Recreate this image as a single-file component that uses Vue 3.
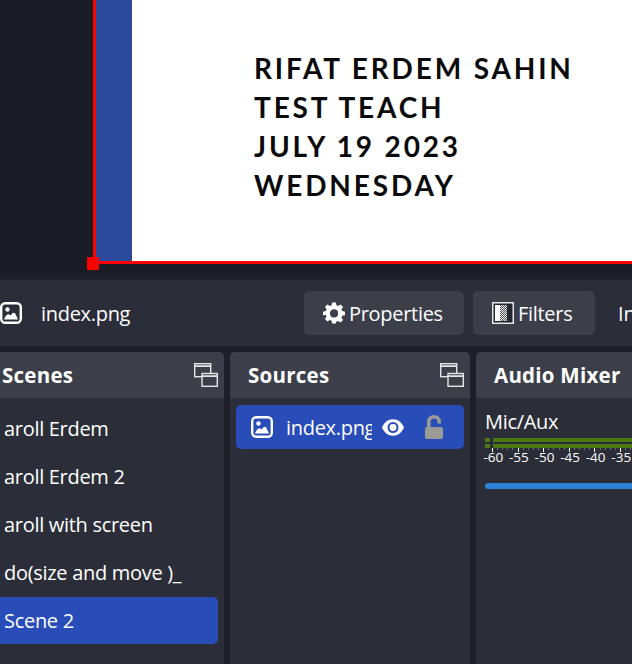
<script setup>
const scenes = [
  { name: 'aroll Erdem', active: false },
  { name: 'aroll Erdem 2', active: false },
  { name: 'aroll with screen', active: false },
  { name: 'do(size and move )_', active: false },
  { name: 'Scene 2', active: true },
]
const titleLines = ['RIFAT ERDEM SAHIN', 'TEST TEACH', 'JULY 19 2023', 'WEDNESDAY']
const scale = ['-60', '-55', '-50', '-45', '-40', '-35']
</script>

<template>
  <div class="app">
    <section class="preview">
      <div class="canvas">
        <div class="strip"></div>
        <div class="slide">
          <div v-for="line in titleLines" :key="line" class="slide-line">{{ line }}</div>
        </div>
        <span class="handle"></span>
      </div>
    </section>

    <div class="preview-gap"></div>

    <section class="toolbar">
      <svg class="image-icon" viewBox="0 0 22 22" fill="none">
        <rect x="1.2" y="1.2" width="19.6" height="19.6" rx="4" stroke="#fff" stroke-width="2.4" />
        <circle cx="7.5" cy="7.5" r="2.2" fill="#fff" />
        <path d="M4 17.5 C5 14 7.500 11.500 9 12.500 C10 13 10.500 13.500 11 13 C12.500 10.500 14.500 10 15.500 12 L18 17.500 Z" fill="#fff" />
      </svg>
      <span class="source-name">index.png</span>
      <button class="tool-btn props">
        <svg class="gear" viewBox="0 0 24 24">
          <path fill="#fff" fill-rule="evenodd" d="M10 1h4l.6 3.1 1.9.8 2.6-1.8 2.8 2.8-1.8 2.6.8 1.9L24 11v4l-3.1.6-.8 1.9 1.8 2.6-2.8 2.8-2.6-1.8-1.9.8L14 24h-4l-.6-3.1-1.9-.8-2.6 1.8-2.8-2.8 1.8-2.6-.8-1.9L0 15v-4l3.1-.6.8-1.9L2.1 5.900l2.8-2.8 2.6 1.8 1.9-.8Zm2 7.500a4.500 4.500 0 1 0 0 9 4.500 4.500 0 0 0 0-9Z" transform="translate(0 -.5)" />
        </svg>
        Properties
      </button>
      <button class="tool-btn filters">
        <svg class="filter-icon" viewBox="0 0 22 22">
          <defs>
            <pattern id="dither" width="2" height="2" patternUnits="userSpaceOnUse">
              <rect width="1" height="1" fill="#e8e8e8" />
              <rect x="1" y="1" width="1" height="1" fill="#e8e8e8" />
              <rect x="1" width="1" height="1" fill="#55575f" />
              <rect y="1" width="1" height="1" fill="#55575f" />
            </pattern>
          </defs>
          <rect x=".75" y=".75" width="20.5" height="20.5" fill="#24262e" stroke="#e6e6e8" stroke-width="1.5" />
          <rect x="3" y="3" width="5" height="16" fill="#fff" />
          <rect x="8" y="3" width="7" height="16" fill="url(#dither)" />
        </svg>
        Filters
      </button>
      <span class="tool-text">Interact</span>
    </section>

    <section class="docks">
      <div class="panel scenes">
        <header class="panel-head">
          <span>Scenes</span>
          <svg class="dock-icon" viewBox="0 0 24 24" fill="none" stroke="#e6e6e8" stroke-width="1.4">
            <rect x=".7" y=".7" width="16" height="13" />
            <path d="M1 3.200h15" stroke-width="1.800" />
            <rect x="8" y="10.500" width="15.300" height="12.800" fill="#3c3f4a" />
            <path d="M8 13.200h15" stroke-width="1.800" />
          </svg>
        </header>
        <ul class="scene-list">
          <li v-for="s in scenes" :key="s.name" class="scene-row" :class="{ active: s.active }">{{ s.name }}</li>
        </ul>
      </div>

      <div class="panel sources">
        <header class="panel-head">
          <span>Sources</span>
          <svg class="dock-icon" viewBox="0 0 24 24" fill="none" stroke="#e6e6e8" stroke-width="1.4">
            <rect x=".7" y=".7" width="16" height="13" />
            <path d="M1 3.200h15" stroke-width="1.800" />
            <rect x="8" y="10.500" width="15.300" height="12.800" fill="#3c3f4a" />
            <path d="M8 13.200h15" stroke-width="1.800" />
          </svg>
        </header>
        <div class="source-row">
          <svg class="image-icon small" viewBox="0 0 22 22" fill="none">
            <rect x="1.2" y="1.2" width="19.6" height="19.6" rx="4" stroke="#fff" stroke-width="2.4" />
            <circle cx="7.5" cy="7.5" r="2.2" fill="#fff" />
            <path d="M4 17.5 C5 14 7.500 11.500 9 12.500 C10 13 10.500 13.500 11 13 C12.500 10.500 14.500 10 15.500 12 L18 17.500 Z" fill="#fff" />
          </svg>
          <span class="source-label">index.png</span>
          <svg class="eye" viewBox="0 0 24 18">
            <path fill="#fff" fill-rule="evenodd" d="M12 0C6.500 0 2.200 3.700 0 9c2.200 5.300 6.500 9 12 9s9.800-3.700 12-9c-2.200-5.300-6.500-9-12-9Zm0 3a6 6 0 1 1 0 12 6 6 0 0 1 0-12Zm0 2.200a3.800 3.800 0 1 0 0 7.600 3.800 3.800 0 0 0 0-7.600Z" />
          </svg>
          <svg class="lock" viewBox="0 0 18 24">
            <path fill="none" stroke="#9a9a98" stroke-width="3.600" d="M3.800 13V6.500a5.200 4.700 0 0 1 10.400 0V8.500" />
            <rect y="12" width="18" height="12" rx="2" fill="#9a9a98" />
          </svg>
        </div>
      </div>

      <div class="panel mixer">
        <header class="panel-head"><span>Audio Mixer</span></header>
        <div class="mixer-body">
          <div class="channel">Mic/Aux</div>
          <div class="meter"><i class="meter-lo"></i><i class="meter-hi"></i></div>
          <div class="meter"><i class="meter-lo"></i><i class="meter-hi"></i></div>
          <div class="ticks"></div>
          <div class="scale">
            <span v-for="n in scale" :key="n">{{ n }}</span>
          </div>
          <div class="slider"></div>
        </div>
      </div>
    </section>
  </div>
</template>

<style>
html, body { margin: 0; background: #1d1f29; overflow: hidden; }
</style>

<style scoped>
.app {
  width: 632px;
  height: 664px;
  overflow: hidden;
  background: #1d1f29;
  color: #fff;
  font-family: "Open Sans", sans-serif;
}

.preview {
  height: 273px;
  background: #1a1c26;
  padding-left: 93px;
}

.canvas {
  position: relative;
  box-sizing: border-box;
  width: 700px;
  height: 264px;
  border-left: 3px solid #f00;
  border-bottom: 3px solid #f00;
  display: flex;
}

.strip {
  width: 36px;
  background: #2b4a9b;
}

.slide {
  flex: 1;
  background: #fff;
  color: #0a0a0a;
  padding: 49px 0 0 122px;
  font-family: Lato, sans-serif;
  font-weight: 700;
  font-size: 28px;
  line-height: 39px;
  letter-spacing: 2.85px;
  white-space: nowrap;
}

.handle {
  position: absolute;
  left: -9px;
  bottom: -9px;
  width: 12px;
  height: 13px;
  background: #f00;
}

.preview-gap {
  height: 7px;
  background: #1d1f29;
}

.toolbar {
  height: 66px;
  background: #2b2e38;
  display: flex;
  align-items: center;
  white-space: nowrap;
  overflow: hidden;
}

.image-icon {
  width: 22px;
  height: 22px;
  flex: none;
}

.source-name {
  flex: none;
  margin-left: 19px;
  width: 263px;
  font-size: 20px;
  letter-spacing: -.3px;
}

.tool-btn {
  height: 44px;
  display: flex;
  align-items: center;
  border: 0;
  border-radius: 5px;
  background: #3c3f4a;
  color: #fff;
  font: 20px "Open Sans", sans-serif;
  letter-spacing: -.3px;
  flex: none;
  padding: 0;
}

.props {
  width: 160px;
  padding-left: 19px;
  gap: 4px;
}

.gear {
  width: 22px;
  height: 22px;
}

.filters {
  width: 122px;
  margin-left: 9px;
  padding-left: 19px;
  gap: 4px;
}

.filter-icon {
  width: 22px;
  height: 22px;
}

.tool-text {
  flex: none;
  margin-left: 23px;
  font-size: 20px;
}

.docks {
  margin-top: 6px;
  height: 312px;
  display: flex;
  gap: 6px;
  margin-left: -16px;
}

.panel {
  flex: none;
  background: #2b2e38;
  border-radius: 5px 5px 0 0;
  overflow: hidden;
}

.scenes { width: 240px; }
.sources { width: 240px; }
.mixer { width: 300px; }

.panel-head {
  height: 46px;
  box-sizing: border-box;
  background: #3c3f4a;
  padding: 0 6px 0 18px;
  display: flex;
  align-items: center;
  justify-content: space-between;
  font-size: 20.5px;
  letter-spacing: .25px;
  font-weight: 700;
}

.dock-icon {
  width: 24px;
  height: 24px;
}

.scene-list {
  list-style: none;
  margin: 0;
  padding: 7px 6px 0 0;
}

.scene-row {
  height: 47px;
  margin-bottom: 1px;
  line-height: 47px;
  padding-left: 20px;
  font-size: 20px;
  letter-spacing: -.3px;
  border-radius: 5px;
  white-space: nowrap;
}

.scene-row.active {
  background: #284cb8;
}

.source-row {
  margin: 7px 6px 0;
  height: 44px;
  padding-left: 15px;
  border-radius: 5px;
  background: #284cb8;
  display: flex;
  align-items: center;
  white-space: nowrap;
}

.small {
  margin-right: 13px;
}

.source-label {
  width: 86px;
  overflow: hidden;
  font-size: 20px;
  letter-spacing: -.3px;
}

.eye {
  width: 22px;
  height: 17px;
  margin-left: 10px;
}

.lock {
  width: 18px;
  height: 24px;
  margin-left: 21px;
}

.mixer-body {
  padding: 12px 0 0 9px;
}

.channel {
  font-size: 20px;
  letter-spacing: -.3px;
  line-height: 24px;
}

.meter {
  display: flex;
  height: 4px;
  margin-bottom: 1.5px;
}

.channel + .meter {
  margin-top: 4px;
}

.meter-lo {
  width: 5px;
  background: #4c7a12;
}

.meter-hi {
  flex: 1;
  margin-left: 3px;
  background: #4c7a12;
}

.ticks {
  height: 4px;
  margin: -1px 0 0 7px;
  background:
    repeating-linear-gradient(90deg, #fff 0 1px, transparent 1px 25.6px) 0 0 / 100% 4px no-repeat,
    repeating-linear-gradient(90deg, #6c6e75 0 1px, transparent 1px 5.12px) 0 0 / 100% 2px no-repeat;
}

.scale {
  display: flex;
  margin: -2px 0 0 -4.5px;
  font-size: 13.5px;
  line-height: 15px;
}

.scale span {
  flex: none;
  width: 25.600px;
  text-align: center;
}

.slider {
  margin-top: 17.5px;
  height: 6px;
  border-radius: 3px 0 0 3px;
  background: #2d82d6;
}
</style>
